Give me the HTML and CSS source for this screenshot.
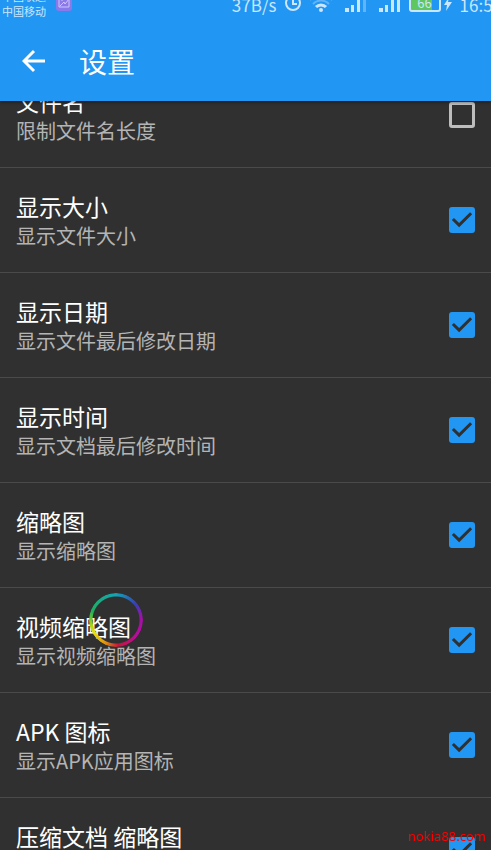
FILE: index.html
```html
<!DOCTYPE html>
<html lang="zh-CN">
<head>
<meta charset="utf-8">
<meta name="viewport" content="width=device-width">
<title>设置</title>
<link rel="stylesheet" href="styles.css">
</head>
<body>
<header class="appbar">
  <div class="status">
    <div class="carriers"><span>中国联通</span><span>中国移动</span></div>
    <svg class="badge" width="16" height="18" viewBox="0 0 16 18"><rect width="16" height="18" rx="3" fill="#8a79ea"/><path d="M3 4h10v10H3zM4 13l4-4 1 2 4-5M5 7h2" fill="none" stroke="#cfc8fa" stroke-width="1"/></svg>
    <div class="indicators">
      <span class="speed">37B/s</span>
      <svg class="clock" width="16" height="18" viewBox="0 0 16 18"><circle cx="8" cy="9" r="7" fill="none" stroke="#cbe6fd" stroke-width="2"/><path d="M8 5v5h4" fill="none" stroke="#cbe6fd" stroke-width="2"/></svg>
      <svg class="wifi" width="24" height="18" viewBox="0 0 24 18"><path d="M1 6a16 16 0 0 1 22 0" fill="none" stroke="#62b3f7" stroke-width="2"/><path d="M4 10a11 11 0 0 1 16 0" fill="none" stroke="#62b3f7" stroke-width="2"/><path d="M7 13a7 7 0 0 1 10 0" fill="none" stroke="#cbe6fd" stroke-width="3"/><circle cx="12" cy="16" r="2" fill="#cbe6fd"/></svg>
      <svg class="signal" width="22" height="18" viewBox="0 0 22 18"><path d="M0 14h4v4H0zM6 11h3v7H6zM12 6h3v12h-3z" fill="#cbe6fd"/><path d="M18 0h3v18h-3z" fill="#62b3f7"/></svg>
      <svg class="signal" width="22" height="18" viewBox="0 0 22 18"><path d="M0 14h4v4H0zM6 11h3v7H6zM12 6h3v12h-3zM18 0h3v18h-3z" fill="#cbe6fd"/></svg>
      <span class="battery">66</span>
      <svg class="bolt" width="8" height="18" viewBox="0 0 8 18"><path d="M5 3L0 11h3l-1 6 6-9H4z" fill="#cbe6fd"/></svg>
      <span class="time">16:52</span>
    </div>
  </div>
  <div class="toolbar">
    <button class="back" type="button" aria-label="返回"><svg width="24" height="24" viewBox="0 0 24 24"><path d="M12 2L2 12l10 10M2 12h21" fill="none" stroke="#fff" stroke-width="3"/></svg></button>
    <h1>设置</h1>
  </div>
</header>
<main class="content">
  <div class="list">
    <label class="row"><span class="text"><span class="title">文件名</span><span class="summary">限制文件名长度</span></span><input type="checkbox"></label>
    <label class="row"><span class="text"><span class="title">显示大小</span><span class="summary">显示文件大小</span></span><input type="checkbox" checked></label>
    <label class="row"><span class="text"><span class="title">显示日期</span><span class="summary">显示文件最后修改日期</span></span><input type="checkbox" checked></label>
    <label class="row"><span class="text"><span class="title">显示时间</span><span class="summary">显示文档最后修改时间</span></span><input type="checkbox" checked></label>
    <label class="row"><span class="text"><span class="title">缩略图</span><span class="summary">显示缩略图</span></span><input type="checkbox" checked></label>
    <label class="row"><span class="text"><span class="title">视频缩略图</span><span class="summary">显示视频缩略图</span></span><input type="checkbox" checked><span class="touch"></span></label>
    <label class="row"><span class="text"><span class="title">APK 图标</span><span class="summary">显示APK应用图标</span></span><input type="checkbox" checked></label>
    <label class="row"><span class="text"><span class="title">压缩文档 缩略图</span><span class="summary">显示压缩文档缩略图</span></span><input type="checkbox" checked></label>
  </div>
</main>
<div class="watermark">nokia88.com</div>
</body>
</html>
```
FILE: styles.css
```css
* { box-sizing: border-box; }
body {
  margin: 0;
  height: 100vh;
  display: flex;
  flex-direction: column;
  overflow: hidden;
  background: #303030;
  color: #fff;
  font-family: "Noto Sans CJK SC", sans-serif;
}
.appbar {
  flex: none;
  overflow: hidden;
  background: #2196f3;
  box-shadow: 0 1px 3px rgba(0, 0, 0, 0.5);
  z-index: 1;
}
.status {
  display: flex;
  align-items: flex-end;
  height: 32px;
  margin-top: -12px;
  padding-left: 2px;
  color: #cbe6fd;
  white-space: nowrap;
}
.carriers {
  display: flex;
  flex-direction: column;
  padding-bottom: 1px;
  font-size: 11px;
  line-height: 15px;
}
.badge { margin: 0 0 9px 10px; }
.indicators {
  flex: 1;
  display: flex;
  justify-content: flex-end;
  align-items: flex-end;
  height: 32px;
  margin-right: -11px;
  padding-bottom: 8px;
}
.speed, .time {
  font-size: 17px;
  line-height: 14px;
}
.clock { margin-left: 8px; }
.wifi { margin-left: 8px; }
.signal { margin-left: 12px; }
.battery {
  width: 32px;
  height: 18px;
  margin-left: 8px;
  border: 2px solid #cbe6fd;
  border-radius: 3px;
  background: linear-gradient(to right, #5fc75f 21px, transparent 21px);
  font-size: 13px;
  line-height: 14px;
  text-align: center;
}
.bolt { margin-left: 3px; }
.time { margin-left: 8px; }
.toolbar {
  display: flex;
  align-items: center;
  height: 81px;
  padding: 0 20px 0 22px;
}
.back {
  display: flex;
  padding: 0;
  border: 0;
  background: none;
}
h1 {
  margin: 0 0 0 33px;
  font-size: 28px;
  font-weight: 400;
  line-height: 36px;
}
.content {
  flex: 1;
  min-height: 0;
  overflow: hidden;
}
.list { margin-top: -38px; }
.row {
  position: relative;
  display: flex;
  align-items: center;
  justify-content: space-between;
  height: 105px;
  padding: 0 16px;
  border-bottom: 1px solid #4a4a4a;
}
.text {
  display: flex;
  flex-direction: column;
  padding-top: 2px;
}
.title {
  font-size: 23px;
  line-height: 30px;
}
.summary {
  font-size: 20px;
  line-height: 30px;
  color: #b4b4b4;
}
input {
  appearance: none;
  flex: none;
  width: 26px;
  height: 26px;
  margin: 0;
  border: 3px solid #bdbdbd;
  border-radius: 3px;
}
input:checked {
  border: 0;
  background: #2196f3;
}
input:checked::before {
  content: "";
  display: block;
  height: 100%;
  background: #303030;
  clip-path: polygon(39% 78%, 11% 50%, 19% 42%, 39% 62%, 81% 20%, 89% 28%);
}
.touch {
  position: absolute;
  left: 89px;
  top: 5px;
  width: 54px;
  height: 54px;
  border-radius: 50%;
  background: conic-gradient(#12a5b5, #3540b5 50deg, #a010a8 85deg, #b80d98 130deg, #c8143c 175deg, #e0900c 205deg, #e8e010 240deg, #8fce20 265deg, #1fae5c 290deg, #12a5b5);
  mask: radial-gradient(circle, transparent 23px, #000 24px);
}
.watermark {
  position: fixed;
  right: 5px;
  bottom: 4px;
  color: #f00;
  font-family: "Noto Sans", "Open Sans", sans-serif;
  font-size: 13px;
  line-height: 20px;
  z-index: 2;
}
```
